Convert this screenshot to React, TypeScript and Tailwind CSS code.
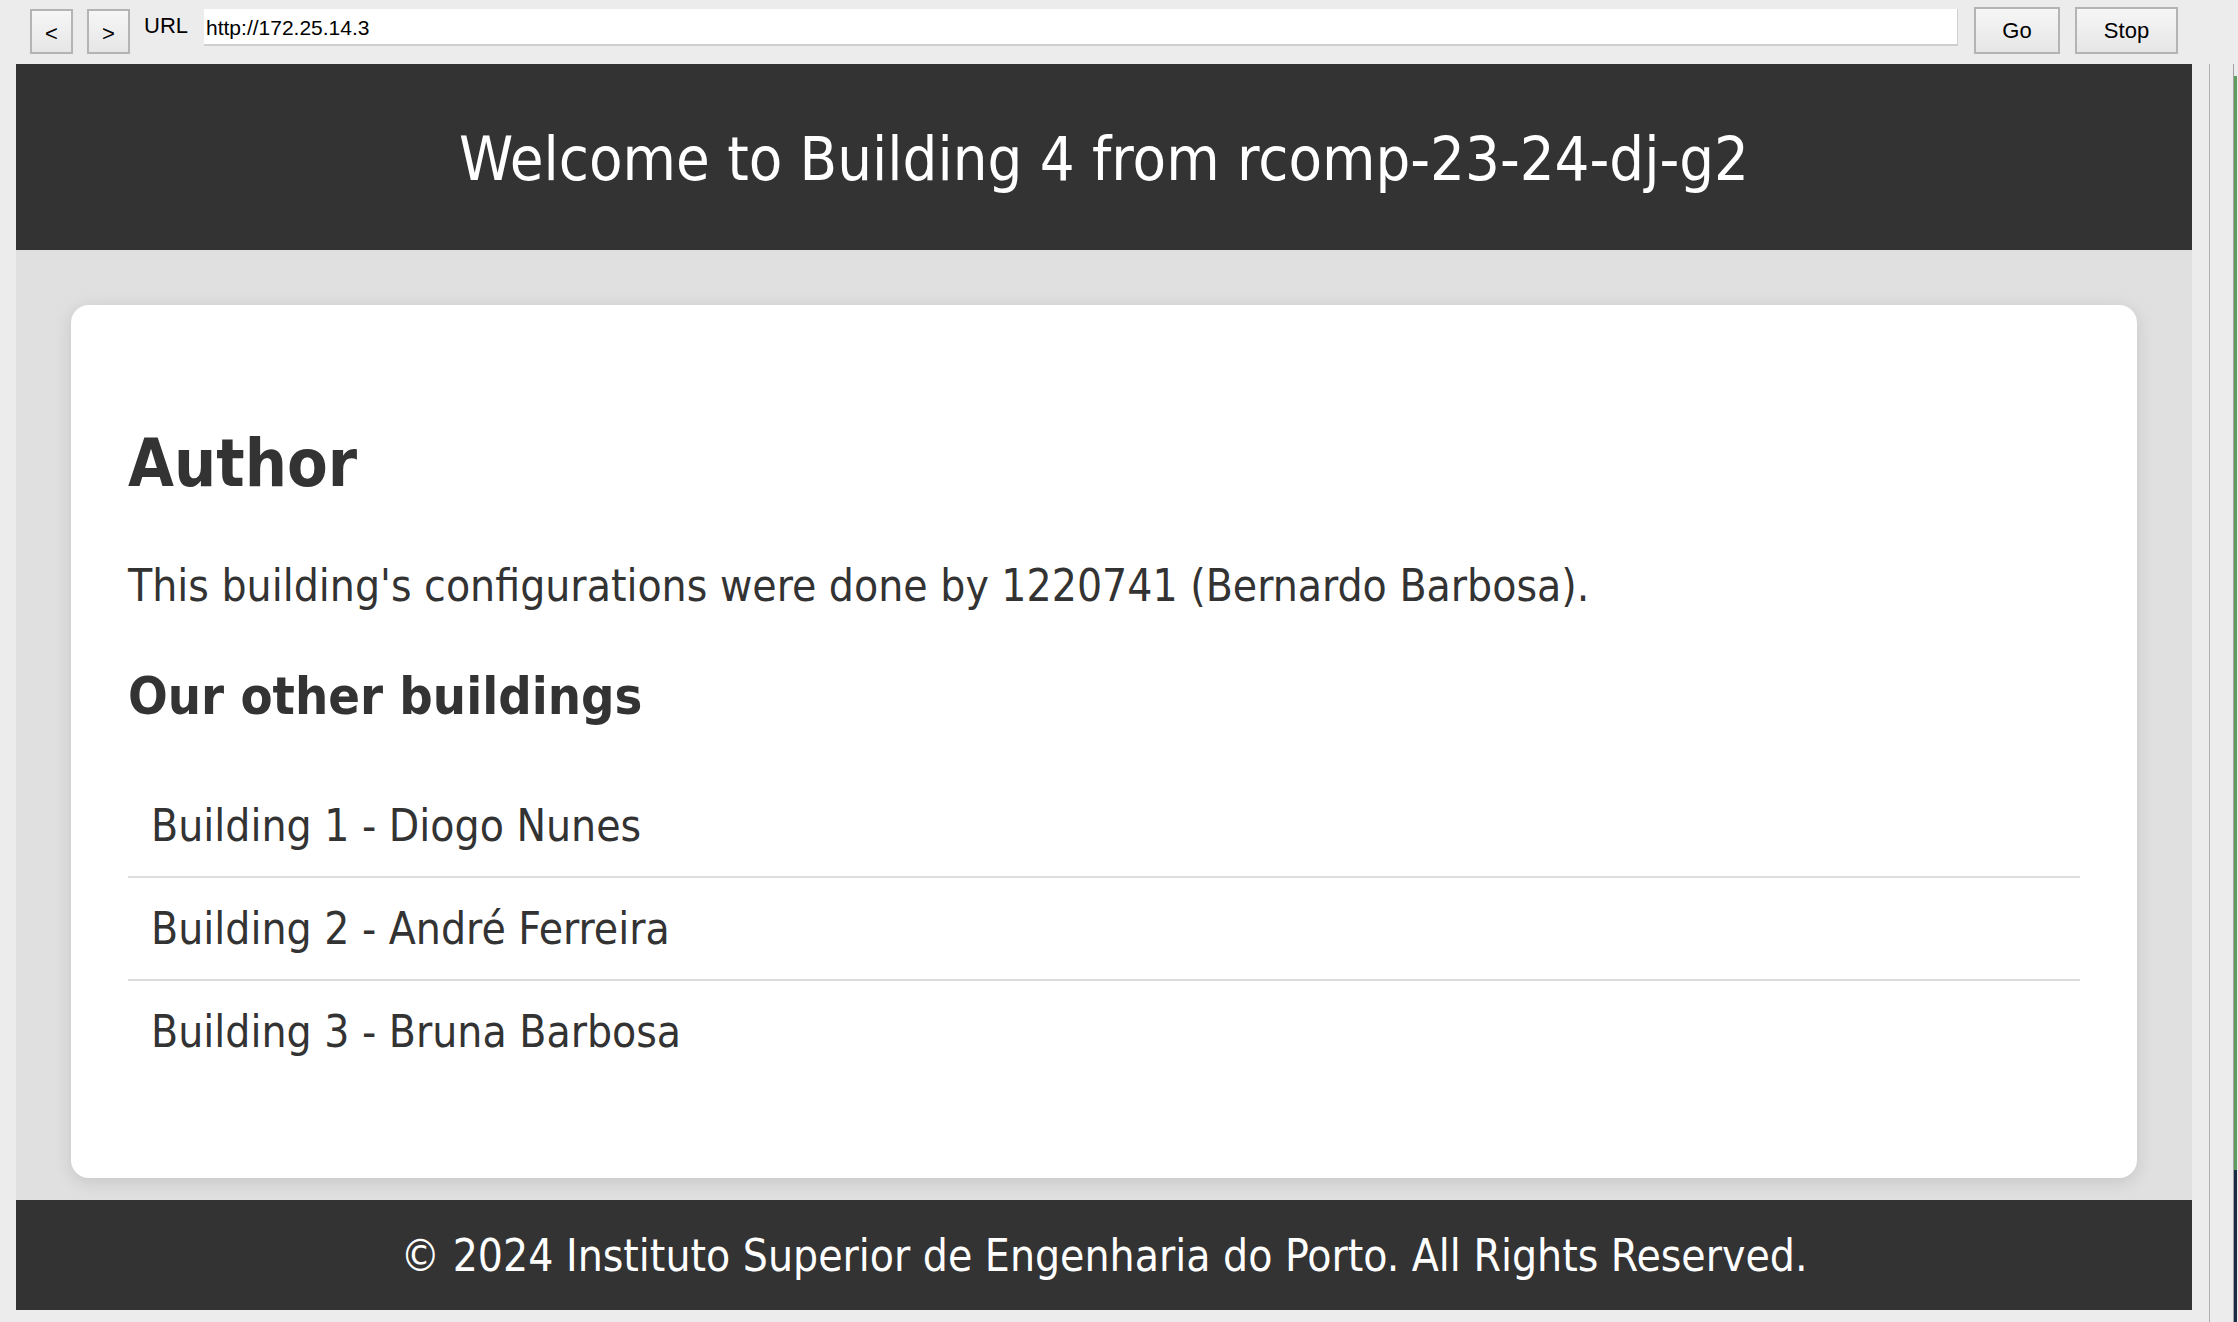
import React from "react";

const buildings = [
  "Building 1 - Diogo Nunes",
  "Building 2 - André Ferreira",
  "Building 3 - Bruna Barbosa",
];

const pageFont = {
  fontFamily: '"DejaVu Sans Condensed", "DejaVu Sans", Verdana, sans-serif',
};

function ToolButton({ label, className }: { label: string; className: string }) {
  return (
    <button
      className={`flex items-center justify-center border-2 border-[#b4b4b4] bg-gradient-to-b from-[#f6f6f6] to-[#e6e6e6] text-[22px] text-black ${className}`}
    >
      {label}
    </button>
  );
}

export default function App() {
  return (
    <div
      className="flex h-[1322px] w-[2238px] flex-col overflow-hidden bg-[#ececec]"
      style={{ fontFamily: '"Liberation Sans", Arial, sans-serif' }}
    >
      {/* Browser toolbar */}
      <div className="flex h-[64px] shrink-0 items-start pr-[60px]">
        <ToolButton label="<" className="ml-[30px] mt-[9px] h-[45px] w-[43px] pt-[4px]" />
        <ToolButton label=">" className="ml-[14px] mt-[9px] h-[45px] w-[43px] pt-[4px]" />
        <span className="ml-[14px] mt-[9px] text-[22px] text-black">URL</span>
        <div className="ml-[16px] mt-[9px] flex h-[37px] flex-1 items-start border-b-2 border-r border-[#cfcfcf] bg-white pl-[2px] pt-[3px] text-[21px] text-black">
          http://172.25.14.3
        </div>
        <ToolButton label="Go" className="ml-[16px] mt-[7px] h-[47px] w-[86px]" />
        <ToolButton label="Stop" className="ml-[15px] mt-[7px] h-[47px] w-[103px]" />
      </div>

      <div className="flex flex-1">
        {/* Page */}
        <div className="ml-[16px] flex w-[2176px] flex-col bg-[#e0e0e0] text-[#333333]" style={pageFont}>
          <header className="flex h-[186px] shrink-0 items-center justify-center bg-[#333333]">
            <h1 className="pt-[4px] text-[61px] leading-[76px] text-white">
              Welcome to Building 4 from rcomp-23-24-dj-g2
            </h1>
          </header>

          <main className="flex-1 px-[55px] pb-[22px] pt-[55px]">
            <section className="h-[873px] rounded-[18px] bg-white px-[57px] pt-[56px] shadow-[0_4px_18px_rgba(0,0,0,0.12)]">
              <h2 className="mt-[61px] text-[66px] font-bold leading-[84px]">Author</h2>
              <p className="mt-[53px] text-[44px] leading-[54px]">
                This building's configurations were done by 1220741 (Bernardo Barbosa).
              </p>
              <h3 className="mt-[52px] text-[52px] font-bold leading-[62px]">Our other buildings</h3>
              <ul className="mt-[48px] w-[1952px]">
                {buildings.map((b, i) => (
                  <li
                    key={b}
                    className={`py-[21px] pl-[23px] text-[44px] leading-[59px] ${
                      i < buildings.length - 1 ? "border-b-2 border-[#dddddd]" : ""
                    }`}
                  >
                    {b}
                  </li>
                ))}
              </ul>
            </section>
          </main>

          <footer className="flex h-[110px] shrink-0 items-center justify-center bg-[#333333]">
            <p className="text-[44px] leading-[53px] text-white">
              © 2024 Instituto Superior de Engenharia do Porto. All Rights Reserved.
            </p>
          </footer>
          <div className="h-[12px] shrink-0 bg-[#ececec]" />
        </div>

        {/* Right edge of the window */}
        <div className="flex flex-1">
          <div className="ml-[17px] w-px bg-[#b0b0b0]" />
          <div className="ml-[23px] w-px bg-[#a0a0a0]" />
          <div className="flex w-[3px] flex-col">
            <div className="h-[12px] bg-[#ececec]" />
            <div className="h-[1094px] bg-[#5f9e5f]" />
            <div className="flex-1 bg-[#1c2b44]" />
          </div>
        </div>
      </div>
    </div>
  );
}
